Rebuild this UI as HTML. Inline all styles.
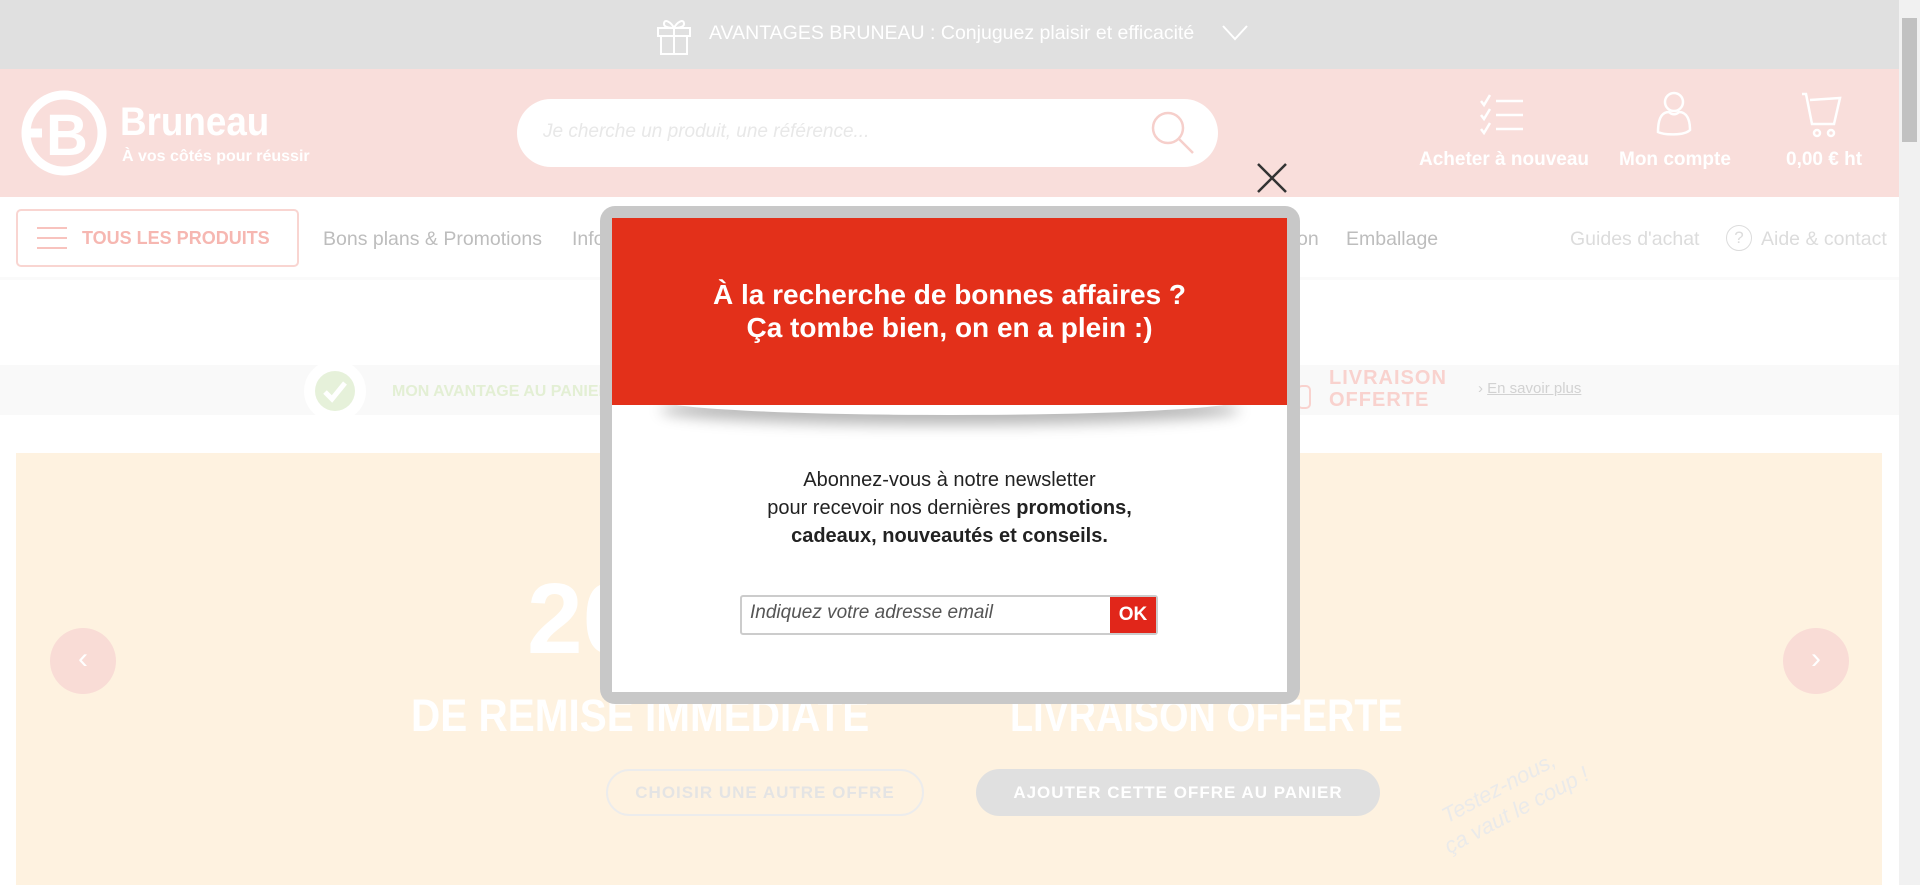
<!DOCTYPE html>
<html><head><meta charset="utf-8"><style>
*{margin:0;padding:0;box-sizing:border-box}
body{width:1920px;height:885px;overflow:hidden;position:relative;background:#fff;font-family:"Liberation Sans",Arial,sans-serif}
.a{position:absolute}
.t{white-space:nowrap}
</style></head><body>
<!-- top bar -->
<div class="a" style="left:0;top:0;width:1899px;height:69px;background:#e0e0e0"></div>
<svg class="a" style="left:655px;top:14px" width="38" height="42" viewBox="0 0 38 42" fill="none" stroke="#fff" stroke-width="2"><rect x="3" y="14" width="32" height="8"/><rect x="6" y="22" width="26" height="18"/><path d="M19 14v26M19 14c-3-6-10-10-10-4 0 3 5 4 10 4M19 14c3-6 10-10 10-4 0 3-5 4-10 4"/></svg>
<div class="a t" style="left:709px;top:22px;font-size:19.5px;color:#fff">AVANTAGES BRUNEAU : Conjuguez plaisir et efficacité</div>
<svg class="a" style="left:1222px;top:25px" width="26" height="16"><path d="M1 1l12 13L25 1" fill="none" stroke="#fff" stroke-width="2"/></svg>
<!-- header -->
<div class="a" style="left:0;top:69px;width:1899px;height:128px;background:#f9dedb"></div>
<svg class="a" style="left:20px;top:89px" width="88" height="88" viewBox="0 0 88 88" fill="none" stroke="#fff"><circle cx="44" cy="44" r="38" stroke-width="9"/><path d="M6 44h16" stroke-width="9"/><text x="26" y="66" font-size="58" font-weight="bold" fill="#fff" stroke="none" font-family="Liberation Sans">B</text></svg>
<div class="a t" style="left:120px;top:100px;font-size:40px;font-weight:bold;color:#fff;transform:scaleX(.92);transform-origin:left">Bruneau</div>
<div class="a t" style="left:122px;top:148px;font-size:16px;font-weight:bold;color:#fff">À vos côtés pour réussir</div>
<div class="a" style="left:517px;top:99px;width:701px;height:68px;background:#fff;border-radius:34px"></div>
<div class="a t" style="left:543px;top:121px;font-size:19px;font-style:italic;color:#e8e8e8">Je cherche un produit, une référence...</div>
<svg class="a" style="left:1150px;top:110px" width="46" height="46" fill="none" stroke="#f6cfcb" stroke-width="2.5"><circle cx="18" cy="18" r="15"/><path d="M29 29l14 14"/></svg>
<svg class="a" style="left:1479px;top:93px" width="46" height="42" fill="none" stroke="#fff" stroke-width="2.5"><path d="M2 8l3 4 6-10M2 22l3 4 6-10M2 36l3 4 6-10M17 8h27M17 22h27M17 36h27"/></svg>
<svg class="a" style="left:1654px;top:90px" width="40" height="48" fill="none" stroke="#fff" stroke-width="2.5"><circle cx="20" cy="12" r="9"/><path d="M4 42c0-12 3-20 11-20 3 3 7 3 10 0 8 0 11 8 11 18-6 6-26 5-32 2z"/></svg>
<svg class="a" style="left:1800px;top:92px" width="48" height="46" fill="none" stroke="#fff" stroke-width="2.5"><path d="M2 2h4l6 30h22l6-26-30 2"/><circle cx="17" cy="41" r="3"/><circle cx="31" cy="41" r="3"/></svg>
<div class="a t" style="left:1419px;top:149px;font-size:19px;font-weight:bold;color:#fff">Acheter à nouveau</div>
<div class="a t" style="left:1619px;top:149px;font-size:19px;font-weight:bold;color:#fff">Mon compte</div>
<div class="a t" style="left:1786px;top:149px;font-size:19px;font-weight:bold;color:#fff">0,00 € ht</div>
<!-- nav -->
<div class="a" style="left:16px;top:209px;width:283px;height:58px;border:2px solid #f9d5d1;border-radius:5px"></div>
<svg class="a" style="left:37px;top:226px" width="30" height="24" stroke="#f8c3be" stroke-width="2"><path d="M0 2h30M0 12h30M0 22h30"/></svg>
<div class="a t" style="left:82px;top:228px;font-size:18px;font-weight:bold;color:#f6b7b1">TOUS LES PRODUITS</div>
<div class="a t" style="left:323px;top:228px;font-size:19.5px;color:#bdbdbd">Bons plans &amp; Promotions</div>
<div class="a t" style="left:572px;top:228px;font-size:19.5px;color:#bdbdbd">Info</div>
<div class="a t" style="left:1297px;top:228px;font-size:19.5px;color:#bdbdbd">on</div>
<div class="a t" style="left:1346px;top:228px;font-size:19.5px;color:#bdbdbd">Emballage</div>
<div class="a t" style="left:1570px;top:228px;font-size:19.5px;color:#dcdcdc">Guides d'achat</div>
<div class="a" style="left:1726px;top:225px;width:26px;height:26px;border:1.5px solid #dcdcdc;border-radius:50%;color:#dcdcdc;font-size:17px;text-align:center;line-height:23px">?</div>
<div class="a t" style="left:1761px;top:228px;font-size:19.5px;color:#dcdcdc">Aide &amp; contact</div>
<div class="a" style="left:0;top:277px;width:1899px;height:3px;background:#fafafa"></div>
<!-- band -->
<div class="a" style="left:0;top:365px;width:1899px;height:50px;background:#f9f9f9"></div>
<div class="a" style="left:304px;top:360px;width:62px;height:62px;border-radius:50%;background:#fff"></div>
<div class="a" style="left:315px;top:371px;width:40px;height:40px;border-radius:50%;background:#e6f1da"></div>
<svg class="a" style="left:321px;top:378px" width="28" height="26"><path d="M4 14l7 7L24 5" fill="none" stroke="#fff" stroke-width="5"/></svg>
<div class="a t" style="left:392px;top:383px;font-size:16px;font-weight:bold;color:#e3efd4">MON AVANTAGE AU PANIER</div>
<div class="a t" style="left:1329px;top:367px;font-size:20px;font-weight:bold;color:#f9d2ce;line-height:22px;letter-spacing:1px">LIVRAISON<br>OFFERTE</div>
<div class="a" style="left:1297px;top:385px;width:14px;height:24px;border:2px solid #f9d2ce;border-radius:5px"></div>
<div class="a t" style="left:1478px;top:380px;font-size:15px;color:#d2d2d2">›&nbsp;<span style="text-decoration:underline">En savoir plus</span></div>
<!-- banner -->
<div class="a" style="left:16px;top:453px;width:1866px;height:432px;background:#fef2e0"></div>
<div class="a" style="left:50px;top:628px;width:66px;height:66px;border-radius:50%;background:#f9dcd6;color:#fff;font-size:30px;text-align:center;line-height:62px">‹</div>
<div class="a" style="left:1783px;top:628px;width:66px;height:66px;border-radius:50%;background:#f9dcd6;color:#fff;font-size:30px;text-align:center;line-height:62px">›</div>
<div class="a t" style="left:527px;top:562px;font-size:100px;font-weight:bold;color:#fff">20</div>
<div class="a t" style="left:411px;top:690px;font-size:45px;font-weight:bold;color:#fff;transform:scaleX(.9);transform-origin:left">DE REMISE IMMEDIATE</div>
<div class="a t" style="left:1010px;top:690px;font-size:45px;font-weight:bold;color:#fff;transform:scaleX(.84);transform-origin:left">LIVRAISON OFFERTE</div>
<div class="a" style="left:606px;top:769px;width:318px;height:47px;border:2px solid #ececec;border-radius:24px;color:#e4e4e4;font-size:17px;font-weight:bold;text-align:center;line-height:43px;letter-spacing:1px">CHOISIR UNE AUTRE OFFRE</div>
<div class="a" style="left:976px;top:769px;width:404px;height:47px;background:#e0e0e0;border-radius:24px;color:#fff;font-size:17px;font-weight:bold;text-align:center;line-height:47px;letter-spacing:1px">AJOUTER CETTE OFFRE AU PANIER</div>
<div class="a t" style="left:1430px;top:770px;font-size:22px;font-style:italic;color:#eaeaea;transform:rotate(-28deg);line-height:28px">&nbsp;&nbsp;Testez-nous,<br>ça vaut le coup !</div>
<!-- scrollbar -->
<div class="a" style="left:1899px;top:0;width:21px;height:885px;background:#f1f1f1"></div>
<div class="a" style="left:1902px;top:18px;width:15px;height:124px;background:#c1c1c1"></div>
<!-- modal -->
<svg class="a" style="left:1256px;top:162px" width="32" height="32"><path d="M2 2l28 28M30 2L2 30" stroke="#333" stroke-width="2.5"/></svg>
<div class="a" style="left:600px;top:206px;width:700px;height:498px;background:#c8c8c8;border-radius:15px"></div>
<div class="a" style="left:612px;top:218px;width:675px;height:474px;background:#fff"></div>
<div class="a" style="left:660px;top:385px;width:580px;height:30px;border-radius:50%;box-shadow:0 10px 14px rgba(0,0,0,.28)"></div>
<div class="a" style="left:612px;top:218px;width:675px;height:187px;background:#e3301a"></div>
<div class="a" style="left:612px;top:278px;width:675px;text-align:center;color:#fff;font-size:28px;font-weight:bold;line-height:33px">À la recherche de bonnes affaires ?<br>Ça tombe bien, on en a plein :)</div>
<div class="a" style="left:612px;top:466px;width:675px;text-align:center;color:#222;font-size:20px;line-height:28px">Abonnez-vous à notre newsletter<br>pour recevoir nos dernières <b>promotions,<br>cadeaux, nouveautés et conseils.</b></div>
<div class="a" style="left:740px;top:595px;width:418px;height:40px;border:2px solid #ccc;border-radius:3px;background:#fff"></div>
<div class="a t" style="left:750px;top:602px;font-size:19px;font-style:italic;color:#555">Indiquez votre adresse email</div>
<div class="a" style="left:1110px;top:597px;width:46px;height:36px;background:#e1261a;color:#fff;font-weight:bold;font-size:19px;text-align:center;line-height:36px">OK</div>
</body></html>
